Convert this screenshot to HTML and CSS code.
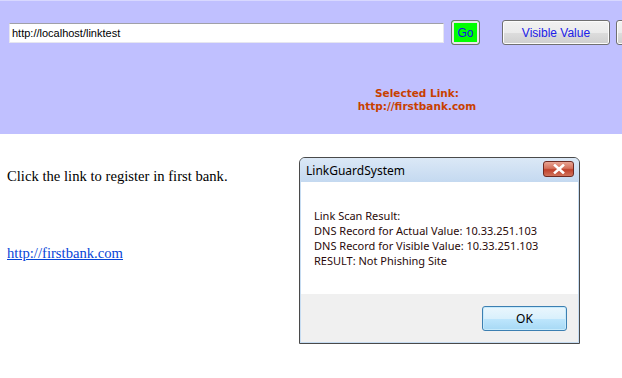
FILE: index.html
```html
<!doctype html>
<html lang="en">
    <head>
        <meta charset="UTF-8" />
        <title>Link Test</title>
        <link rel="stylesheet" href="styles.css">
    </head>
    <body>
        <div class="toolbar">
            <div class="controls">
                <input class="url" type="text" value="http://localhost/linktest" />
                <button class="go">Go</button>
                <button class="btn">Visible Value</button>
                <button class="btn" aria-label="Actual Value"></button>
            </div>
            <div class="selected">Selected Link:<br />http://firstbank.com</div>
        </div>
        <div class="page">
            <p>Click the link to register in first bank.</p>
            <a href="http://firstbank.com">http://firstbank.com</a>
        </div>
        <div class="dialog">
            <div class="dialog-title">
                <span>LinkGuardSystem</span>
                <button class="close-button">
                    <svg width="14" height="10" viewBox="0 0 14 10">
                        <path d="M3 1.5 L11 8.5 M11 1.5 L3 8.5" stroke="#fff" stroke-width="2.6" stroke-linecap="square" />
                    </svg>
                </button>
            </div>
            <div class="dialog-body">
                Link Scan Result:<br />
                DNS Record for Actual Value: 10.33.251.103<br />
                DNS Record for Visible Value: 10.33.251.103<br />
                RESULT: Not Phishing Site
            </div>
            <div class="dialog-footer">
                <button class="ok">OK</button>
            </div>
        </div>
    </body>
</html>
```

FILE: styles.css
```css
body {
    margin: 0;
    background: #fff;
    overflow: hidden;
    font-family: "Liberation Serif", serif;
}
.toolbar {
    background: #c0c0ff;
    border-top: 1px solid #d8d8ff;
    height: 133px;
}
.controls {
    display: flex;
    align-items: center;
    height: 25px;
    padding: 19px 0 0 9px;
    white-space: nowrap;
    overflow: hidden;
}
.controls > * {
    flex-shrink: 0;
}
.url {
    box-sizing: border-box;
    width: 435px;
    height: 20px;
    margin: 0;
    padding: 0 2px;
    border: 1px solid #e6e6f0;
    border-top-color: #a0a0a8;
    background: #fff;
    font-family: "Liberation Sans", sans-serif;
    font-size: 11px;
    color: #000;
    outline: none;
}
.go {
    box-sizing: border-box;
    width: 29px;
    height: 25px;
    margin-left: 7px;
    padding: 0;
    border: 1px solid #707070;
    border-radius: 3px;
    background: #00ff00;
    box-shadow: inset 0 0 0 2px #e8e8e8;
    font-family: "Liberation Sans", sans-serif;
    font-size: 12px;
    color: #1010e0;
}
.btn {
    box-sizing: border-box;
    width: 108px;
    height: 25px;
    margin-left: 6px;
    padding: 0;
    border: 1px solid #707070;
    border-radius: 3px;
    background: linear-gradient(#f2f2f2 0%, #ebebeb 50%, #dddddd 51%, #cfcfcf 100%);
    box-shadow: inset 0 0 0 1px #fcfcfc;
    font-family: "Liberation Sans", sans-serif;
    font-size: 12px;
    color: #2020e8;
}
.go + .btn {
    margin-left: 22px;
}
.selected {
    width: 200px;
    margin: 42px 0 0 317px;
    text-align: center;
    font-family: "DejaVu Sans", sans-serif;
    font-weight: bold;
    font-size: 10.5px;
    line-height: 13px;
    color: #c84000;
}
.page {
    padding: 34px 7px 0;
    font-size: 14.67px;
}
.page p {
    margin: 0 0 60px;
    line-height: 17px;
}
.page a {
    color: #0645d8;
    line-height: 17px;
}
.dialog {
    position: absolute;
    left: 299px;
    top: 157px;
    width: 281px;
    height: 187px;
    box-sizing: border-box;
    border: 1px solid #4a4a4a;
    border-radius: 6px 6px 0 0;
    background: #c6dcf2;
    display: flex;
    flex-direction: column;
    font-family: "Noto Sans", sans-serif;
    overflow: hidden;
}
.dialog-title {
    display: flex;
    align-items: center;
    justify-content: space-between;
    height: 24px;
    padding: 0 5px 0 6px;
    background: linear-gradient(#dbe8f6, #c4d9f0);
    font-size: 12px;
    color: #000;
}
.close-button {
    width: 31px;
    height: 16px;
    margin-top: -2px;
    padding: 0;
    border: 1px solid #6e2a22;
    border-radius: 3px;
    background: linear-gradient(#e8a493 0%, #d4715c 45%, #c0412b 55%, #d0735b 100%);
    display: flex;
    align-items: center;
    justify-content: center;
}
.dialog-body {
    height: 112px;
    margin: 0 1px;
    box-sizing: border-box;
    padding: 26px 13px 0;
    background: #fff;
    font-size: 11px;
    line-height: 15px;
    color: #2a0a0a;
}
.dialog-footer {
    flex: 1;
    margin: 0 1px 1px;
    background: #f0f0f0;
    display: flex;
    justify-content: flex-end;
    align-items: flex-start;
    padding: 12px 11px 0 0;
}
.ok {
    width: 85px;
    height: 25px;
    padding: 0;
    border: 1px solid #3c7fb1;
    border-radius: 3px;
    background: linear-gradient(#eaf6fd 0%, #d9f0fc 50%, #bee6fd 51%, #a7d9f5 100%);
    box-shadow: inset 0 0 0 1px #c6eafc;
    font-family: "Noto Sans", sans-serif;
    font-size: 12px;
    color: #000;
}
```
